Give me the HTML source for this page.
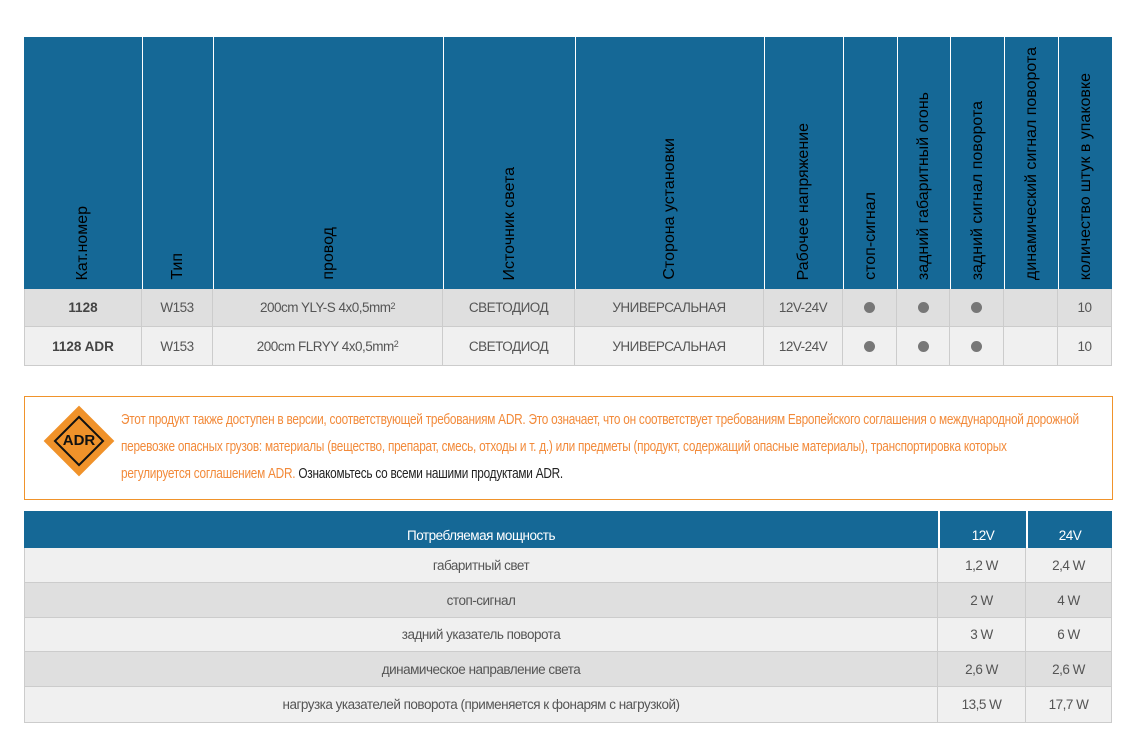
<!DOCTYPE html>
<html><head><meta charset="utf-8"><style>
body{margin:0;width:1144px;height:746px;background:#fff;font-family:"Liberation Sans",sans-serif;position:relative;overflow:hidden}
.a{position:absolute;box-sizing:border-box}
.h{background:#156896;color:#fff}
.vt{position:absolute;bottom:9px;left:50%;writing-mode:vertical-rl;transform:translateX(-50%) rotate(180deg);font-size:16px;white-space:nowrap;line-height:1}
.c{display:flex;align-items:center;justify-content:center;font-size:13.5px;color:#555;letter-spacing:-0.5px;border-right:1px solid #ccc;border-bottom:1px solid #ccc}
.dot{width:11px;height:11px;border-radius:50%;background:#777}
.b{font-weight:bold;color:#444;letter-spacing:0}
sup{font-size:9px;position:relative;top:-2px}
</style></head><body>
<div class="a h" style="left:24px;top:37px;width:1088px;height:252px"></div>
<div id="hdr"></div>
<script>
var xs=[24,142,213,443,575,764,843,897,950,1004,1058,1112];
var hs=["Кат.номер","Тип","провод","Источник света","Сторона установки","Рабочее напряжение","стоп-сигнал","задний габаритный огонь","задний сигнал поворота","динамический сигнал поворота","количество штук в упаковке"];
var r1=["<span class=b>1128</span>","W153","200cm YLY-S 4x0,5mm<sup>2</sup>","СВЕТОДИОД","УНИВЕРСАЛЬНАЯ","12V-24V","<i class=dot></i>","<i class=dot></i>","<i class=dot></i>","","10"];
var r2=["<span class=b>1128 ADR</span>","W153","200cm FLRYY 4x0,5mm<sup>2</sup>","СВЕТОДИОД","УНИВЕРСАЛЬНАЯ","12V-24V","<i class=dot></i>","<i class=dot></i>","<i class=dot></i>","","10"];
var o="";
for(var i=0;i<11;i++){var l=xs[i],w=xs[i+1]-xs[i];
o+='<div class="a" style="left:'+l+'px;top:37px;width:'+w+'px;height:252px;'+(i?'border-left:1px solid #fff':'')+'"><span class=vt>'+hs[i]+'</span></div>';
o+='<div class="a c" style="left:'+l+'px;top:289px;width:'+w+'px;height:38px;background:#dfdfdf;'+(i?'':'border-left:1px solid #ccc')+'">'+r1[i]+'</div>';
o+='<div class="a c" style="left:'+l+'px;top:327px;width:'+w+'px;height:39px;background:#f0f0f0;'+(i?'':'border-left:1px solid #ccc')+'">'+r2[i]+'</div>';}
var t=[["габаритный свет","1,2 W","2,4 W"],["стоп-сигнал","2 W","4 W"],["задний указатель поворота","3 W","6 W"],["динамическое направление света","2,6 W","2,6 W"],["нагрузка указателей поворота (применяется к фонарям с нагрузкой)","13,5 W","17,7 W"]];
var ys=[548,583,618,652,687,723];var cx=[24,938,1026,1112];
o+='<div class="a h" style="left:24px;top:511px;width:1088px;height:37px"></div>';
var hh=["Потребляемая мощность","12V","24V"];
for(var j=0;j<3;j++)o+='<div class="a" style="left:'+cx[j]+'px;top:511px;width:'+(cx[j+1]-cx[j])+'px;height:37px;color:#fff;font-size:13.5px;letter-spacing:-0.5px;display:flex;align-items:flex-end;justify-content:center;padding-bottom:5px;'+(j?'border-left:2px solid #fff':'')+'">'+hh[j]+'</div>';
for(var r=0;r<5;r++)for(var j=0;j<3;j++)o+='<div class="a c" style="left:'+cx[j]+'px;top:'+ys[r]+'px;width:'+(cx[j+1]-cx[j])+'px;height:'+(ys[r+1]-ys[r])+'px;background:'+(r%2?'#dfdfdf':'#f0f0f0')+';'+(j?'':'border-left:1px solid #ccc')+'">'+t[r][j]+'</div>';
document.getElementById("hdr").innerHTML=o;
</script>
<div class="a" style="left:24px;top:396px;width:1089px;height:104px;border:1px solid #f0932b"></div>
<div class="a" style="left:54px;top:416px;width:50px;height:50px;background:#f0922a;transform:rotate(45deg)"></div>
<div class="a" style="left:61px;top:423px;width:36px;height:36px;border:2px solid #111;transform:rotate(45deg)"></div>
<div class="a" style="left:49px;top:432px;width:60px;text-align:center;font-weight:bold;font-size:15px;color:#111">ADR</div>
<div class="a" style="left:121px;top:407px;width:1300px;font-size:14.5px;line-height:27px;color:#f28a3a;letter-spacing:-0.3px;white-space:nowrap;transform:scaleX(0.815);transform-origin:0 0">Этот продукт также доступен в версии, соответствующей требованиям ADR. Это означает, что он соответствует требованиям Европейского соглашения о международной дорожной<br>перевозке опасных грузов: материалы (вещество, препарат, смесь, отходы и т. д.) или предметы (продукт, содержащий опасные материалы), транспортировка которых<br>регулируется соглашением ADR. <span style="color:#222">Ознакомьтесь со всеми нашими продуктами ADR.</span></div>
</body></html>
